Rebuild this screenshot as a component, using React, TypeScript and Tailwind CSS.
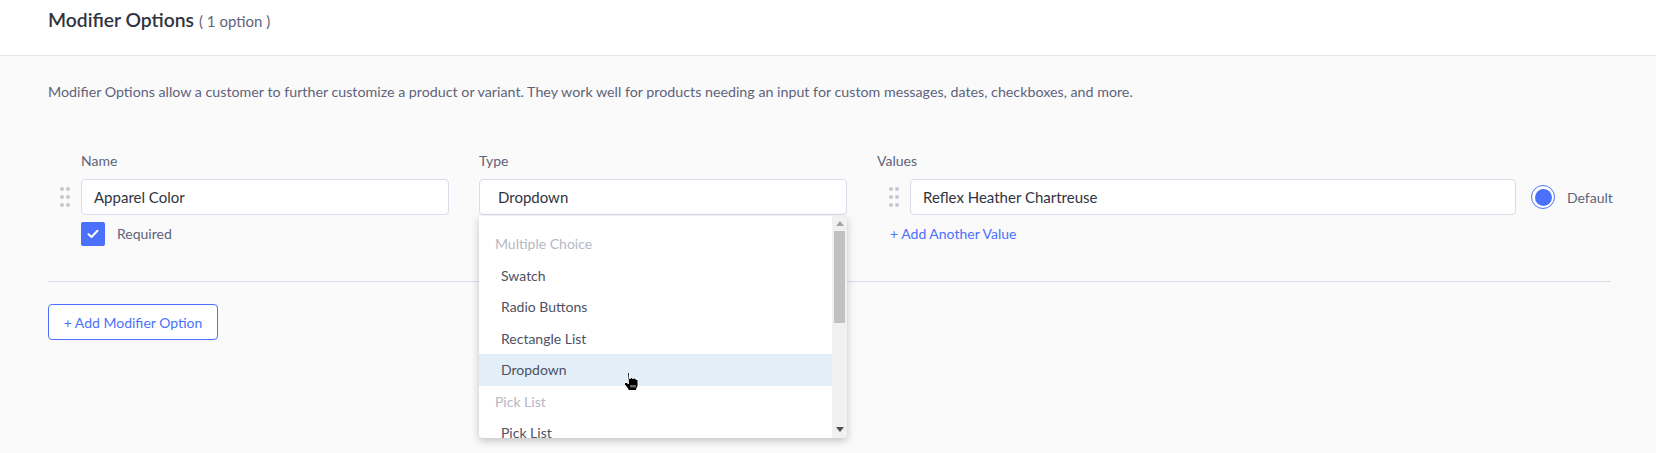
import React from "react";

function DragHandle() {
  return (
    <svg width="10" height="20" viewBox="0 0 10 20" className="block">
      {[2, 10, 18].map((y) => (
        <g key={y}>
          <circle cx="2" cy={y} r="2" fill="#c4c7d2" />
          <circle cx="8" cy={y} r="2" fill="#c4c7d2" />
        </g>
      ))}
    </svg>
  );
}

function HandCursor() {
  return (
    <svg width="17" height="18" viewBox="0 0 17 18" className="block">
      <path
        d="M4.5 0.5 h2 v6 h1 v-1 h2 v1 h1 v-0.5 h2 v1 h1 v0.5 h1.5 v6.5 l-1.5 3 v1.5 h-8.5 v-1.5 l-3.5 -4.5 v-2 h2.5 l1.5 1.5 z"
        fill="#000"
        stroke="#fff"
        strokeWidth="1"
        strokeLinejoin="round"
      />
      <path d="M8 13 v2.5 M10 13 v2.5 M12 13 v2.5" stroke="#fff" strokeWidth="0.8" />
    </svg>
  );
}

export default function App() {
  const items: { label: string; group?: boolean; active?: boolean }[] = [
    { label: "Multiple Choice", group: true },
    { label: "Swatch" },
    { label: "Radio Buttons" },
    { label: "Rectangle List" },
    { label: "Dropdown", active: true },
    { label: "Pick List", group: true },
    { label: "Pick List" },
  ];

  return (
    <div className="w-[1656px] h-[453px] bg-[#fafafa] overflow-hidden [font-family:Lato,'Noto_Sans',sans-serif]">
      {/* Header */}
      <div className="h-[56px] bg-white border-b border-[#e6e7eb] pl-[48px] pt-[8px]">
        <h2 className="text-[19.3px] leading-[24px] font-semibold text-[#313440]">
          Modifier Options
          <span className="text-[15px] font-normal text-[#5e637a] ml-[5px]">( 1 option )</span>
        </h2>
      </div>

      {/* Body */}
      <div className="pl-[48px] pr-[45px] pt-[26px]">
        <p className="text-[14.25px] leading-[20px] text-[#5e637a]">
          Modifier Options allow a customer to further customize a product or variant. They work well for products
          needing an input for custom messages, dates, checkboxes, and more.
        </p>

        <div className="mt-[49px] flex items-start">
          {/* Name column */}
          <div className="w-[401px] shrink-0">
            <div className="pl-[33px] text-[14px] leading-[20px] text-[#5e637a] mb-[8px]">Name</div>
            <div className="flex items-center">
              <div className="w-[33px] flex justify-center">
                <DragHandle />
              </div>
              <div className="w-[368px] h-[36px] bg-white border border-[#d9dce9] rounded-[4px] flex items-center pl-[12px] text-[15px] text-[#313440]">
                Apparel Color
              </div>
            </div>
            <div className="pl-[33px] mt-[7px] flex items-center gap-[12px]">
              <div className="w-[24px] h-[24px] rounded-[2px] bg-[#4b71fc] flex items-center justify-center">
                <svg width="12" height="10" viewBox="0 0 12 10">
                  <path d="M1.5 5.2 L4.5 8 L10.5 1.8" fill="none" stroke="#fff" strokeWidth="2" strokeLinecap="round" strokeLinejoin="round" />
                </svg>
              </div>
              <span className="text-[14px] leading-[20px] text-[#5e637a]">Required</span>
            </div>
          </div>

          {/* Type column */}
          <div className="ml-[30px] w-[368px] shrink-0 relative">
            <div className="text-[14px] leading-[20px] text-[#5e637a] mb-[8px]">Type</div>
            <div className="h-[36px] bg-white border border-[#d9dce9] rounded-[4px] flex items-center pl-[18px] text-[15px] text-[#313440]">
              Dropdown
            </div>
            {/* Dropdown list */}
            <div className="absolute left-0 top-[65px] w-[368px] h-[222px] bg-white rounded-b-[4px] shadow-[0_3px_8px_rgba(0,0,0,0.22)] overflow-hidden z-10">
              <div className="pt-[12px] pr-[15px]">
                {items.map((it, i) => (
                  <div
                    key={i}
                    className={
                      it.group
                        ? "h-[31.5px] flex items-center pl-[16px] text-[14px] text-[#b5b8c5]"
                        : it.active
                        ? "h-[31.5px] flex items-center pl-[22px] text-[14px] text-[#4d5163] bg-[#e2eff9] relative"
                        : "h-[31.5px] flex items-center pl-[22px] text-[14px] text-[#4d5163]"
                    }
                  >
                    {it.label}
                    {it.active && (
                      <div className="absolute left-[144px] top-[18px]">
                        <HandCursor />
                      </div>
                    )}
                  </div>
                ))}
              </div>
              {/* Scrollbar */}
              <div className="absolute right-0 top-0 bottom-0 w-[15px] bg-[#f1f1f1] flex flex-col items-center">
                <svg width="8" height="5" viewBox="0 0 8 5" className="mt-[5px]">
                  <path d="M0 5 L4 0 L8 5 Z" fill="#a3a3a3" />
                </svg>
                <div className="mt-[5px] w-[11px] h-[92px] bg-[#c1c1c1]" />
                <div className="flex-1" />
                <svg width="8" height="5" viewBox="0 0 8 5" className="mb-[6px]">
                  <path d="M0 0 L8 0 L4 5 Z" fill="#505050" />
                </svg>
              </div>
            </div>
          </div>

          {/* Values column */}
          <div className="ml-[30px] flex-1">
            <div className="text-[14px] leading-[20px] text-[#5e637a] mb-[8px]">Values</div>
            <div className="flex items-center">
              <div className="w-[33px] flex justify-center">
                <DragHandle />
              </div>
              <div className="w-[606px] h-[36px] bg-white border border-[#d9dce9] rounded-[4px] flex items-center pl-[12px] text-[15px] text-[#313440]">
                Reflex Heather Chartreuse
              </div>
              <div className="ml-[15px] w-[24px] h-[24px] rounded-full border border-[#4b71fc] bg-white flex items-center justify-center">
                <div className="w-[17px] h-[17px] rounded-full bg-[#4b71fc]" />
              </div>
              <span className="ml-[12px] text-[14px] text-[#5e637a]">Default</span>
            </div>
            <div className="pl-[13px] mt-[9px] text-[14px] leading-[20px] text-[#4b71fc]">+ Add Another Value</div>
          </div>
        </div>

        <div className="mt-[35px] border-t border-[#d9dce9]" />

        <button className="mt-[22px] w-[170px] h-[36px] bg-white border border-[#4b71fc] rounded-[4px] text-[14px] text-[#4b71fc] flex items-center justify-center">
          + Add Modifier Option
        </button>
      </div>
    </div>
  );
}
